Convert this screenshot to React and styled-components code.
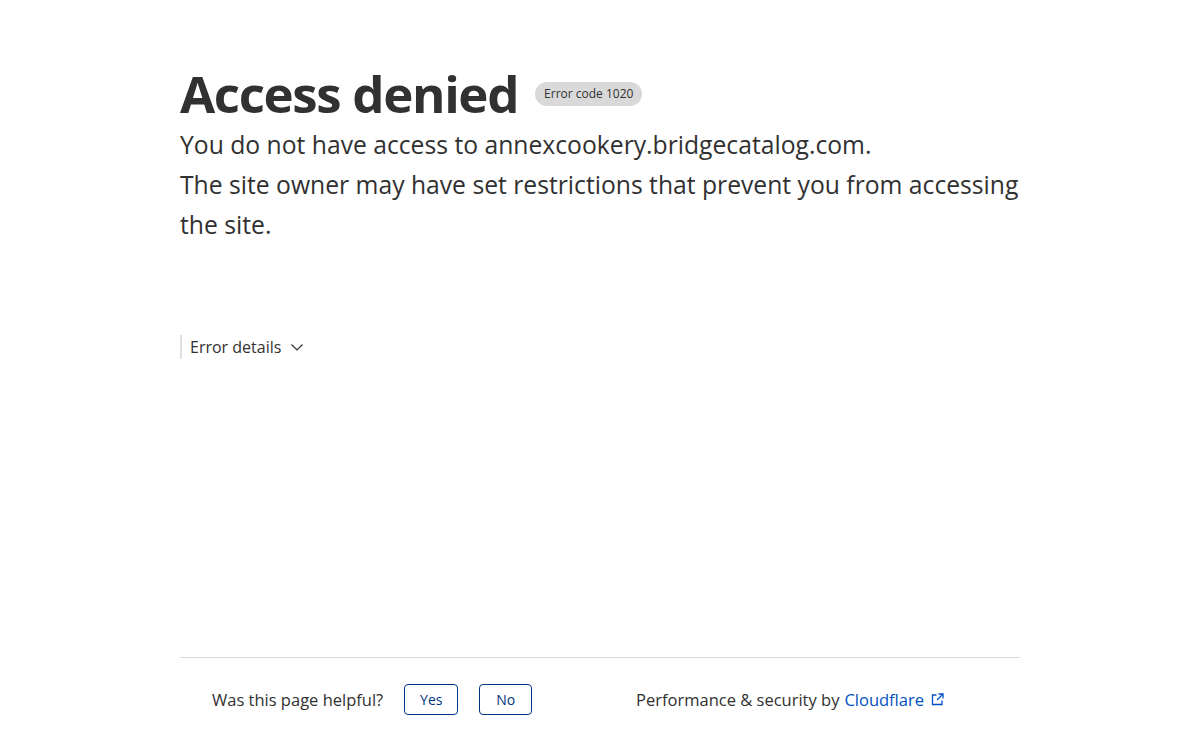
import React from 'react';
import styled, { createGlobalStyle } from 'styled-components';

const GlobalStyle = createGlobalStyle`
  html, body {
    margin: 0;
    padding: 0;
    background: #ffffff;
  }
  body {
    font-family: "Open Sans", "Noto Sans", "Liberation Sans", sans-serif;
    color: #313131;
  }
`;

const Page = styled.div`
  width: 840px;
  margin: 0 auto;
  height: 740px;
  display: flex;
  flex-direction: column;
`;

const Main = styled.main`
  flex: 1;
  padding-top: 61px;
`;

const TitleRow = styled.div`
  display: flex;
  align-items: center;
  gap: 17px;
`;

const Title = styled.h1`
  margin: 0;
  font-size: 51px;
  line-height: 64px;
  font-weight: 700;
  color: #313131;
  letter-spacing: -1.35px;
`;

const Badge = styled.span`
  display: inline-block;
  background: #d9d9d9;
  color: #313131;
  font-size: 12px;
  line-height: 24px;
  padding: 0 9px;
  border-radius: 12px;
  margin-top: 2px;
`;

const Lead = styled.p`
  margin: 0;
  font-size: 24.7px;
  line-height: 40px;
  color: #313131;
`;

const Details = styled.div`
  margin-top: 90px;
  display: inline-flex;
  align-items: center;
  gap: 9px;
  border-left: 2px solid #e0e0e0;
  padding-left: 8px;
  height: 24px;
  font-size: 16px;
  color: #313131;
`;

const Footer = styled.footer`
  border-top: 1px solid #d9d9d9;
  height: 82px;
  display: flex;
  align-items: center;
  padding: 0 32px;
  font-size: 16.5px;
`;

const Helpful = styled.div`
  display: flex;
  align-items: center;
  gap: 21px;
  flex: 1;
`;

const Vote = styled.button`
  font-family: inherit;
  font-size: 14px;
  color: #003681;
  background: #fff;
  border: 1px solid #003681;
  border-radius: 4px;
  height: 31px;
  width: ${p => p.$w}px;
  padding: 0;
  cursor: pointer;
`;

const Powered = styled.div`
  display: flex;
  align-items: center;
  margin-right: 44px;
`;

const Link = styled.a`
  color: #0051c3;
  text-decoration: none;
  margin-left: 5px;
  display: inline-flex;
  align-items: center;
  gap: 7px;
`;

const Chevron = () => (
  <svg width="14" height="14" viewBox="0 0 14 14" fill="none" stroke="#313131" strokeWidth="1.2">
    <path d="M1.5 4.5 L7 10 L12.5 4.5" />
  </svg>
);

const External = () => (
  <svg width="13" height="13" viewBox="0 0 13 13" fill="none" stroke="#0051c3" strokeWidth="1.3">
    <path d="M5.5 2 H1.5 V11.5 H11 V7.5" />
    <path d="M7.5 1 H12 V5.5" />
    <path d="M12 1 L6 7" />
  </svg>
);

export default function App() {
  return (
    <>
      <GlobalStyle />
      <Page>
        <Main>
          <TitleRow>
            <Title>Access denied</Title>
            <Badge>Error code 1020</Badge>
          </TitleRow>
          <Lead>You do not have access to annexcookery.bridgecatalog.com.</Lead>
          <Lead>The site owner may have set restrictions that prevent you from accessing the site.</Lead>
          <Details>
            Error details <Chevron />
          </Details>
        </Main>
        <Footer>
          <Helpful>
            <span>Was this page helpful?</span>
            <Vote $w={54}>Yes</Vote>
            <Vote $w={53}>No</Vote>
          </Helpful>
          <Powered>
            Performance &amp; security by
            <Link href="#">Cloudflare <External /></Link>
          </Powered>
        </Footer>
      </Page>
    </>
  );
}
